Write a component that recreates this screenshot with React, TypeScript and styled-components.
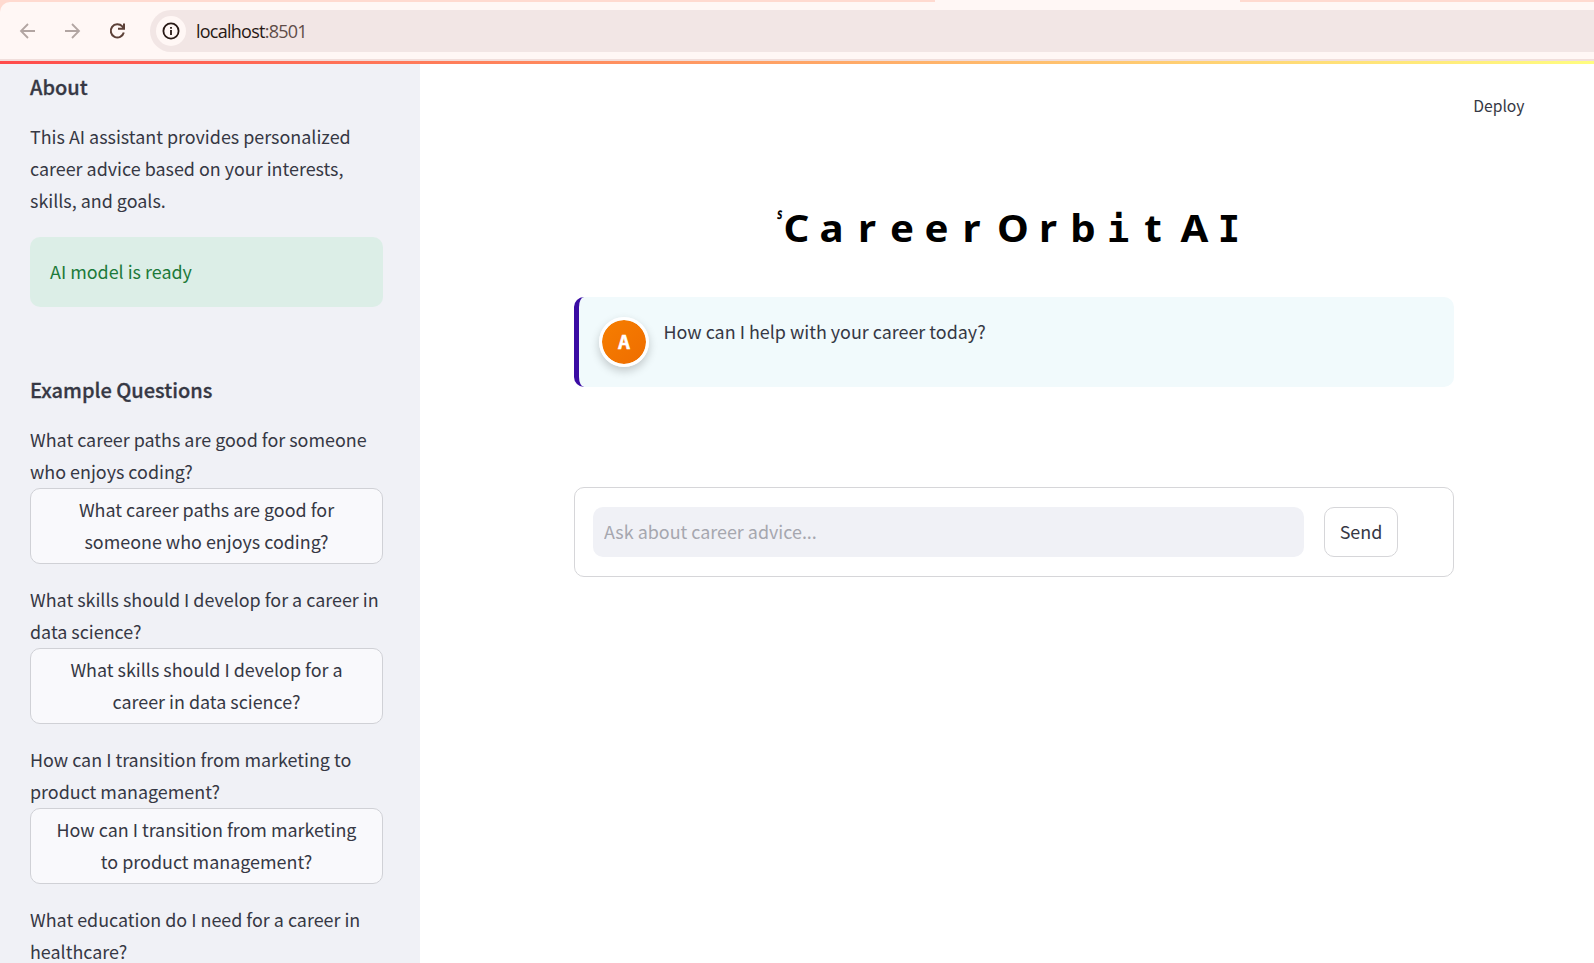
import React from 'react';
import styled, { createGlobalStyle } from 'styled-components';

const Global = createGlobalStyle`
  *, *::before, *::after { box-sizing: border-box; }
  body { margin: 0; background: #fff; overflow: hidden; }
  p, h1, h2 { margin: 0; }
  button, input { font: inherit; color: inherit; }
`;

const Page = styled.div`
  height: 963px;
  overflow: hidden;
  display: flex;
  flex-direction: column;
  font-family: 'Noto Sans CJK SC', 'Noto Sans', sans-serif;
  font-size: 17.92px;
  line-height: 32px;
  color: #363844;
`;

const Browser = styled.header`
  position: relative;
  flex: none;
  height: 61px;
  padding-top: 2px;
  background: #ffdad0;
  border-bottom: 2px solid #f1dedb;
`;

const ActiveTab = styled.div`
  position: absolute;
  top: 0;
  left: 935px;
  width: 305px;
  height: 2px;
  background: #fff7f5;
`;

const Toolbar = styled.nav`
  height: 57px;
  display: flex;
  align-items: center;
  background: #fff7f5;
  border-top-left-radius: 10px;
  padding-left: 18px;
`;

const NavButton = styled.button<{ $on?: boolean }>`
  width: 20px;
  height: 20px;
  margin-right: 25px;
  padding: 0;
  border: 0;
  background: none;
  color: ${(p) => (p.$on ? '#5c4037' : '#b2a5a2')};
  svg { display: block; }
`;

const AddressBar = styled.div`
  flex: 1;
  height: 42px;
  margin: 1px 0 0 -3px;
  padding-left: 6px;
  display: flex;
  align-items: center;
  background: #f2e6e5;
  border-radius: 21px 0 0 21px;
`;

const SiteInfo = styled.span`
  width: 30px;
  height: 30px;
  border-radius: 50%;
  background: #fff7f5;
  display: grid;
  place-items: center;
  color: #271814;
`;

const Url = styled.span`
  margin-left: 10px;
  font: 18px/30px 'Open Sans', sans-serif;
  letter-spacing: -0.75px;
  color: #271814;
  span { color: #5f4c48; }
`;

const Rainbow = styled.div`
  flex: none;
  height: 3px;
  background: linear-gradient(90deg, #ff4b4b, #fffd80);
`;

const Body = styled.div`
  flex: 1;
  min-height: 0;
  display: flex;
`;

const Sidebar = styled.aside`
  width: 420px;
  padding: 7px 37px 0 30px;
  background: #f0f1f6;
`;

const Heading = styled.h2<{ $gap?: boolean }>`
  font-size: 20px;
  font-weight: 500;
  -webkit-text-stroke: 0.3px #363844;
  line-height: 32px;
  margin: ${(p) => (p.$gap ? '67px 0 17px' : '0 0 17px')};
`;

const Status = styled.div`
  margin-top: 21px;
  height: 70px;
  padding: 18px 20px;
  border-radius: 10px;
  background: #dceee7;
  color: #1c7a3a;
`;

const Question = styled.div`
  margin-bottom: 19px;
`;

const QuestionButton = styled.button`
  display: block;
  width: 353px;
  height: 76px;
  margin-top: 1px;
  padding: 4px 16px 6px;
  border: 1px solid #d0d1d6;
  border-radius: 10px;
  background: #f9f9fc;
  line-height: 32px;
  text-align: center;
  white-space: pre-line;
`;

const Main = styled.main`
  flex: 1;
  display: flex;
  flex-direction: column;
  padding: 0 140px 0 154px;
`;

const DeployRow = styled.div`
  display: flex;
  justify-content: flex-end;
  margin: 26px -70.5px 0 0;
  font-size: 15.7px;
`;

const Title = styled.h1`
  display: flex;
  align-items: baseline;
  height: 60px;
  margin: 75px 0 0 203px;
  color: #000;
  font: 700 38px/60px 'Noto Sans', sans-serif;
`;

const Mark = styled.span`
  align-self: flex-start;
  width: 2px;
  font: 700 13px/32px 'Noto Sans', sans-serif;
  transform: scale(0.8, 1.2) skewX(-8deg);
`;

const Glyph = styled.span<{ $w: number; $mono?: boolean }>`
  flex: none;
  width: ${(p) => p.$w}px;
  text-align: center;
  ${(p) => (p.$mono ? "font-family: 'DejaVu Sans Mono', monospace; font-size: 37px;" : 'transform: scaleX(1.06);')}
`;

const Message = styled.section`
  display: flex;
  margin-top: 40px;
  height: 90px;
  padding: 20px;
  border-left: 5px solid #3a0ca3;
  border-radius: 10px;
  background: #f1fafc;
`;

const Avatar = styled.div`
  width: 50px;
  height: 50px;
  margin-right: 14.5px;
  border: 3px solid #fff;
  border-radius: 50%;
  background: linear-gradient(135deg, #f77f00, #ee6c00) border-box;
  background-clip: padding-box;
  box-shadow: 0 4px 10px rgba(0, 0, 0, 0.2);
  color: #fff;
  font-weight: 700;
  -webkit-text-stroke: 0.6px #fff;
  text-align: center;
  line-height: 43px;
`;

const Greeting = styled.p`
  margin-top: -2px;
`;

const Form = styled.form`
  display: flex;
  gap: 20px;
  margin-top: 100px;
  height: 90px;
  padding: 19px 18px;
  border: 1px solid #d6d6d9;
  border-radius: 10px;
`;

const Input = styled.input`
  width: 711px;
  height: 50px;
  padding: 0 11px 3px;
  border: 0;
  border-radius: 10px;
  background: #f0f1f6;
  &::placeholder { color: #a6a7af; opacity: 1; }
`;

const Send = styled.button`
  width: 74px;
  height: 50px;
  padding: 0 0 3px;
  border: 1px solid #d6d6d9;
  border-radius: 10px;
  background: #fff;
`;

const questions: { text: string; label?: string }[] = [
  { text: 'What career paths are good for someone who enjoys coding?', label: 'What career paths are good for\nsomeone who enjoys coding?' },
  { text: 'What skills should I develop for a career in data science?', label: 'What skills should I develop for a\ncareer in data science?' },
  { text: 'How can I transition from marketing to product management?', label: 'How can I transition from marketing\nto product management?' },
  { text: 'What education do I need for a career in healthcare?' },
];

const title: { c: string; w: number; mono?: boolean }[] = [
  { c: 'C', w: 35 }, { c: 'a', w: 35 }, { c: 'r', w: 36 }, { c: 'e', w: 34 },
  { c: 'e', w: 35 }, { c: 'r', w: 35 }, { c: 'O', w: 48 }, { c: 'r', w: 22 },
  { c: 'b', w: 48 }, { c: 'i', w: 20, mono: true }, { c: 't', w: 52 }, { c: 'A', w: 31 },
  { c: 'I', w: 38, mono: true },
];

export default function App() {
  return (
    <Page>
      <Global />
      <Browser>
        <ActiveTab />
        <Toolbar>
          <NavButton aria-label="Back">
            <svg width="20" height="20" viewBox="0 0 20 20" fill="none" stroke="currentColor" strokeWidth="1.8"><path d="M17 10H3.5M10 3L3 10l7 7" /></svg>
          </NavButton>
          <NavButton aria-label="Forward">
            <svg width="20" height="20" viewBox="0 0 20 20" fill="none" stroke="currentColor" strokeWidth="1.8"><path d="M2 10h13.5M9 3l7 7-7 7" /></svg>
          </NavButton>
          <NavButton $on aria-label="Reload">
            <svg width="20" height="20" viewBox="0 0 20 20" fill="none" stroke="currentColor" strokeWidth="2"><path d="M15.8 11.5A6.6 6.6 0 1 1 14.3 5.4L15.6 7M16 2.5v5.3h-6" /></svg>
          </NavButton>
          <AddressBar>
            <SiteInfo>
              <svg width="18" height="18" viewBox="0 0 18 18" fill="none" stroke="currentColor" strokeWidth="1.8"><circle cx="9" cy="9" r="7.6" /><path d="M9 8v5M9 5v1.8" /></svg>
            </SiteInfo>
            <Url>localhost<span>:8501</span></Url>
          </AddressBar>
        </Toolbar>
      </Browser>
      <Rainbow />
      <Body>
        <Sidebar>
          <Heading>About</Heading>
          <p>This AI assistant provides personalized career advice based on your interests, skills, and goals.</p>
          <Status>AI model is ready</Status>
          <Heading $gap>Example Questions</Heading>
          {questions.map(({ text, label }) => (
            <Question key={text}>
              <p>{text}</p>
              {label && <QuestionButton>{label}</QuestionButton>}
            </Question>
          ))}
        </Sidebar>
        <Main>
          <DeployRow>Deploy</DeployRow>
          <Title>
            <Mark>s</Mark>
            {title.map((g, i) => (
              <Glyph key={i} $w={g.w} $mono={g.mono}>{g.c}</Glyph>
            ))}
          </Title>
          <Message>
            <Avatar>A</Avatar>
            <Greeting>How can I help with your career today?</Greeting>
          </Message>
          <Form onSubmit={(e) => e.preventDefault()}>
            <Input placeholder="Ask about career advice..." />
            <Send>Send</Send>
          </Form>
        </Main>
      </Body>
    </Page>
  );
}
